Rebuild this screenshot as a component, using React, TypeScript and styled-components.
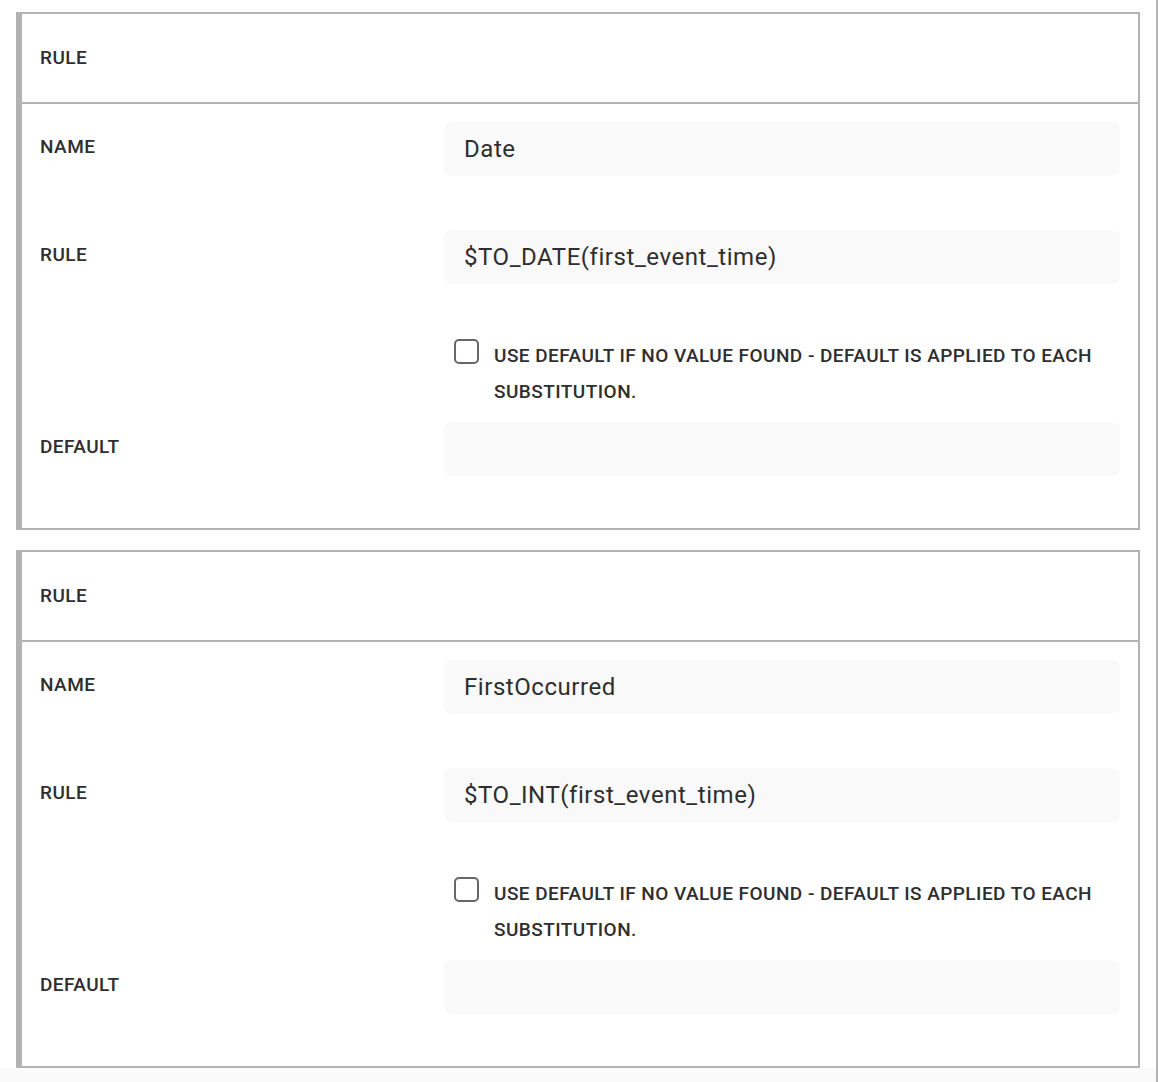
import React from "react";
import styled, { createGlobalStyle } from "styled-components";

const GlobalStyle = createGlobalStyle`
  html, body {
    margin: 0;
    padding: 0;
    background: #ffffff;
  }
  * { box-sizing: border-box; }
  body {
    font-family: Roboto, "Liberation Sans", Arial, sans-serif;
    color: #2e2e2e;
  }
`;

const Page = styled.div`
  width: 1158px;
  min-height: 100vh;
  display: flex;
  flex-direction: column;
  border-right: 2px solid #b3b3b3;
`;

const Content = styled.div`
  display: flex;
  flex-direction: column;
  gap: 20px;
  padding: 12px 16px 0 16px;
  background: #ffffff;
`;

const Footer = styled.div`
  flex: 1;
  background: #fafafa;
`;

const Card = styled.section`
  border: 2px solid #b3b3b3;
  border-left-width: 6px;
  background: #ffffff;
`;

const CardHeader = styled.div`
  height: 90px;
  display: flex;
  align-items: center;
  padding: 0 18px 2px 18px;
  border-bottom: 2px solid #b3b3b3;
`;

const Label = styled.span`
  font-size: 19px;
  font-weight: 500;
  letter-spacing: 0.45px;
  color: #2e2e2e;
  text-transform: uppercase;
`;

const CardBody = styled.div`
  display: flex;
  flex-direction: column;
  padding: 18px 18px 52px 18px;
`;

const Field = styled.div<{ $top?: number }>`
  display: flex;
  align-items: center;
  margin-top: ${(p) => p.$top ?? 0}px;
`;

const LabelCell = styled.div`
  width: 404px;
  flex: none;
  padding-bottom: 5px;
`;

const ControlCell = styled.div`
  flex: 1;
  min-width: 0;
`;

const TextInput = styled.div`
  height: 54px;
  border-radius: 8px;
  background: #f9f9f9;
  display: flex;
  align-items: center;
  padding: 0 20px;
  font-size: 24px;
  font-weight: 400;
  letter-spacing: 0.55px;
  color: #2e2e2e;
`;

const CheckRow = styled.label`
  display: flex;
  align-items: flex-start;
  gap: 15px;
  padding-left: 10px;
  margin-top: 54px;
  margin-left: 404px;
`;

const Box = styled.span`
  flex: none;
  width: 25px;
  height: 25px;
  margin-top: 1px;
  border: 2px solid #676767;
  border-radius: 5px;
  background: #ffffff;
`;

const CheckText = styled.span`
  font-size: 19px;
  font-weight: 500;
  letter-spacing: 0.45px;
  line-height: 36px;
  color: #2e2e2e;
  text-transform: uppercase;
`;

type Rule = { name: string; rule: string };

const rules: Rule[] = [
  { name: "Date", rule: "$TO_DATE(first_event_time)" },
  { name: "FirstOccurred", rule: "$TO_INT(first_event_time)" },
];

function RuleCard({ rule }: { rule: Rule }) {
  return (
    <Card>
      <CardHeader>
        <Label>Rule</Label>
      </CardHeader>
      <CardBody>
        <Field>
          <LabelCell>
            <Label>Name</Label>
          </LabelCell>
          <ControlCell>
            <TextInput>{rule.name}</TextInput>
          </ControlCell>
        </Field>
        <Field $top={54}>
          <LabelCell>
            <Label>Rule</Label>
          </LabelCell>
          <ControlCell>
            <TextInput>{rule.rule}</TextInput>
          </ControlCell>
        </Field>
        <CheckRow>
          <Box role="checkbox" aria-checked="false" />
          <CheckText>
            Use default if no value found - Default is applied to each
            <br />
            substitution.
          </CheckText>
        </CheckRow>
        <Field $top={12}>
          <LabelCell>
            <Label>Default</Label>
          </LabelCell>
          <ControlCell>
            <TextInput />
          </ControlCell>
        </Field>
      </CardBody>
    </Card>
  );
}

export default function App() {
  return (
    <>
      <GlobalStyle />
      <Page>
        <Content>
          {rules.map((r) => (
            <RuleCard key={r.name} rule={r} />
          ))}
        </Content>
        <Footer />
      </Page>
    </>
  );
}
